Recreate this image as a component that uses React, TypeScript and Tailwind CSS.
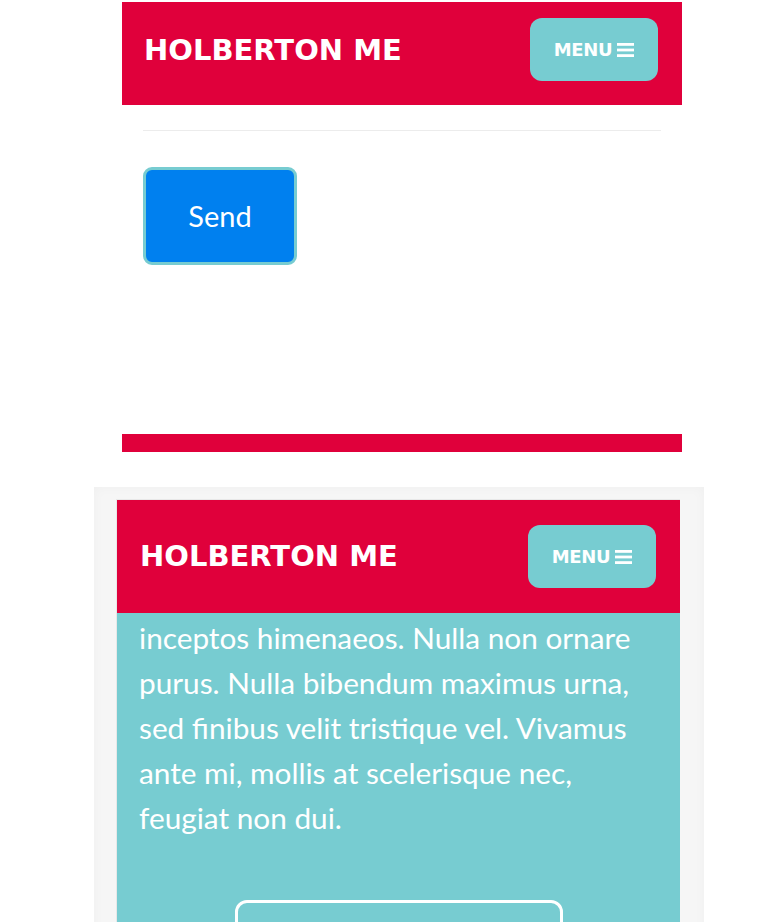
import React from "react";

const titleFont = { fontFamily: '"DejaVu Sans", "Open Sans", sans-serif' };

function Bars() {
  return (
    <svg width="17" height="16" viewBox="0 0 17 16" className="ml-[5px]">
      <rect x="0" y="1" width="17" height="2.8" fill="white" />
      <rect x="0" y="6.6" width="17" height="2.8" fill="white" />
      <rect x="0" y="12.2" width="17" height="2.8" fill="white" />
    </svg>
  );
}

function MenuButton() {
  return (
    <button className="flex h-[63px] w-[128px] items-center justify-center rounded-[12px] bg-[#77ccd1] text-[18px] font-bold text-white">
      <span className="font-['DejaVu_Sans',sans-serif] tracking-[-0.3px]">MENU</span>
      <Bars />
    </button>
  );
}

function Title() {
  return (
    <span style={titleFont} className="text-[29px] font-bold text-white">
      HOLBERTON ME
    </span>
  );
}

export default function App() {
  return (
    <div className="min-h-[922px] bg-white font-['Lato',sans-serif]">
      <div className="ml-[122px] w-[560px] pt-[2px]">
        <header className="flex h-[103px] items-start justify-between bg-[#e0003b] pl-[22px] pr-[24px] pt-[16px]">
          <div className="flex h-[63px] items-center pt-[2px]">
            <Title />
          </div>
          <MenuButton />
        </header>
        <div className="px-[21px]">
          <div className="mt-[25px] h-px bg-[#ececec]" />
          <button className="mt-[36px] h-[98px] w-[154px] rounded-[9px] border-[3px] border-[#77ccd1] bg-[#0080ef] text-[29px] text-white">
            Send
          </button>
        </div>
        <div className="mt-[169px] h-[18px] bg-[#e0003b]" />
      </div>

      <div className="ml-[94px] mt-[35px] w-[610px] bg-[#f6f6f6] px-[22px] pt-[12px] shadow-[inset_0_0_12px_rgba(0,0,0,0.03)]">
        <div className="w-[564px] border-l border-t border-[#e8e8e8]">
          <header className="flex h-[113px] items-center justify-between bg-[#e0003b] pl-[23px] pr-[24px]">
            <Title />
            <MenuButton />
          </header>
          <div className="bg-[#77ccd1] pl-[22px] pr-[36px] pb-[10px]">
            <p className="pt-[2px] text-[29.75px] leading-[45px] text-white">
              inceptos himenaeos. Nulla non ornare purus. Nulla bibendum maximus urna, sed finibus velit tristique vel. Vivamus ante mi, mollis at scelerisque nec, feugiat non dui.
            </p>
            <div className="mt-[60px] flex justify-center pl-[14px]">
              <button className="h-[76px] w-[328px] rounded-[12px] border-[3px] border-white text-[24px] text-white">
                Contact
              </button>
            </div>
          </div>
        </div>
      </div>
    </div>
  );
}
